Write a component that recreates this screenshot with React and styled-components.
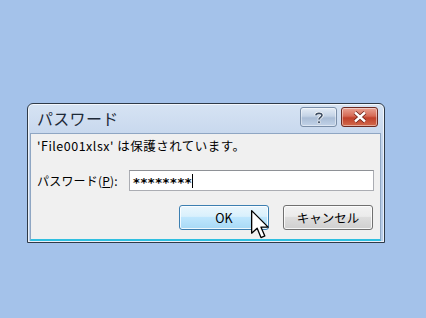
import React from "react";
import styled, { createGlobalStyle } from "styled-components";

const Global = createGlobalStyle`
  html, body { margin: 0; padding: 0; }
  body {
    background: #a4c2ea;
    width: 426px;
    height: 318px;
    overflow: hidden;
    font-family: "Noto Sans CJK JP", "Liberation Sans", sans-serif;
  }
`;

const Page = styled.div`
  padding: 103px 0 0 27px;
`;

const Window = styled.div`
  position: relative;
  width: 358px;
  height: 140px;
  box-sizing: border-box;
  border: 1px solid #2e3a48;
  border-radius: 6px 6px 0 0;
  background: linear-gradient(#d6e3f3, #bccfe9 40%, #b7cce8);
  box-shadow: inset 0 0 0 1px rgba(255, 255, 255, 0.7);
  display: flex;
  flex-direction: column;
  padding: 0 3px 1px 2px;
`;

const TitleBar = styled.div`
  height: 29px;
  flex: none;
  display: flex;
  align-items: center;
  justify-content: space-between;
  padding: 0 3px 0 7px;
`;

const Title = styled.div`
  font-size: 16px;
  color: #1e2a38;
  letter-spacing: 0.3px;
  margin-top: -2px;
`;

const Caps = styled.div`
  display: flex;
  gap: 4px;
  margin-top: -3px;
`;

const CapButton = styled.div`
  width: 37px;
  height: 20px;
  box-sizing: border-box;
  border: 1px solid ${(p) => (p.$close ? "#6b2a22" : "#7a8ea8")};
  border-radius: 3px;
  display: flex;
  align-items: center;
  justify-content: center;
  background: ${(p) =>
    p.$close
      ? "linear-gradient(#e9a394, #d66a55 45%, #c0402a 55%, #d26a4c)"
      : "linear-gradient(#e4ecf6, #c4d3e6 45%, #aabdd6 55%, #c2d3e8)"};
  box-shadow: inset 0 0 0 1px rgba(255, 255, 255, 0.45);
`;

const Client = styled.div`
  flex: 1;
  background: #f0f0f0;
  border: 1px solid #8fa6c3;
  border-bottom: 2px solid #2fbfe0;
  padding: 2px 6px 0 6px;
  display: flex;
  flex-direction: column;
`;

const Message = styled.div`
  font-size: 12.5px;
  letter-spacing: 0.5px;
  color: #000;
  height: 20px;
  line-height: 20px;
`;

const Row = styled.div`
  display: flex;
  align-items: center;
  margin-top: 14px;
`;

const Label = styled.div`
  font-size: 12px;
  width: 92px;
  color: #000;
  letter-spacing: 0.2px;
  u { text-decoration: underline; }
`;

const Input = styled.div`
  width: 245px;
  height: 21px;
  box-sizing: border-box;
  border: 1px solid #abadb3;
  border-top-color: #8e9196;
  background: #fff;
  font-family: "DejaVu Sans", sans-serif;
  font-size: 13px;
  font-weight: bold;
  letter-spacing: 0.6px;
  display: flex;
  align-items: center;
  padding: 4px 0 0 3px;
`;

const Caret = styled.span`
  display: inline-block;
  width: 1px;
  height: 14px;
  background: #000;
  margin: -4px 0 0 0;
`;

const Buttons = styled.div`
  display: flex;
  justify-content: flex-end;
  gap: 14px;
  margin-top: 14px;
  padding-right: 1px;
`;

const Button = styled.div`
  width: 90px;
  height: 25px;
  box-sizing: border-box;
  border: 1px solid ${(p) => (p.$hot ? "#3c7fb1" : "#707070")};
  border-radius: 3px;
  display: flex;
  align-items: center;
  justify-content: center;
  font-size: 12.5px;
  color: #000;
  background: ${(p) =>
    p.$hot
      ? "linear-gradient(#eaf6fd, #d9f0fc 45%, #bee6fd 50%, #a7d9f5)"
      : "linear-gradient(#f2f2f2, #ebebeb 45%, #dddddd 50%, #cfcfcf)"};
  box-shadow: inset 0 0 0 1px rgba(255, 255, 255, 0.8);
`;

const Cursor = styled.svg`
  position: absolute;
  left: 222px;
  top: 105px;
`;

export default function App() {
  return (
    <>
      <Global />
      <Page>
        <Window>
          <TitleBar>
            <Title>パスワード</Title>
            <Caps>
              <CapButton>
                <svg width="12" height="13" viewBox="0 0 12 13">
                  <path
                    d="M3 4.2 C3 1.8 9 1.6 9 4.3 C9 6.2 6 6.4 6 8.4"
                    fill="none"
                    stroke="#fff"
                    strokeWidth="3.2"
                  />
                  <path
                    d="M3 4.2 C3 1.8 9 1.6 9 4.3 C9 6.2 6 6.4 6 8.4"
                    fill="none"
                    stroke="#3a4a60"
                    strokeWidth="1.6"
                  />
                  <rect x="4.8" y="10" width="2.4" height="2.4" fill="#3a4a60" stroke="#fff" strokeWidth="0.6" />
                </svg>
              </CapButton>
              <CapButton $close>
                <svg width="14" height="12" viewBox="0 0 14 12">
                  <path d="M2 1.5 L12 10.5 M12 1.5 L2 10.5" stroke="#6a2016" strokeWidth="4" />
                  <path d="M2 1.5 L12 10.5 M12 1.5 L2 10.5" stroke="#fff" strokeWidth="2.4" />
                </svg>
              </CapButton>
            </Caps>
          </TitleBar>
          <Client>
            <Message>'File001xlsx' は保護されています。</Message>
            <Row>
              <Label>
                パスワード(<u>P</u>):
              </Label>
              <Input>
                ********
                <Caret />
              </Input>
            </Row>
            <Buttons>
              <Button $hot>OK</Button>
              <Button>キャンセル</Button>
            </Buttons>
          </Client>
          <Cursor width="22" height="33" viewBox="0 0 20 30">
            <path
              d="M1.5 1.5 L1.5 22 L6.5 17.5 L10 26 L13.5 24.5 L10 16.5 L16.5 16.5 Z"
              fill="#fff"
              stroke="#000"
              strokeWidth="1.2"
              strokeLinejoin="round"
            />
          </Cursor>
        </Window>
      </Page>
    </>
  );
}
